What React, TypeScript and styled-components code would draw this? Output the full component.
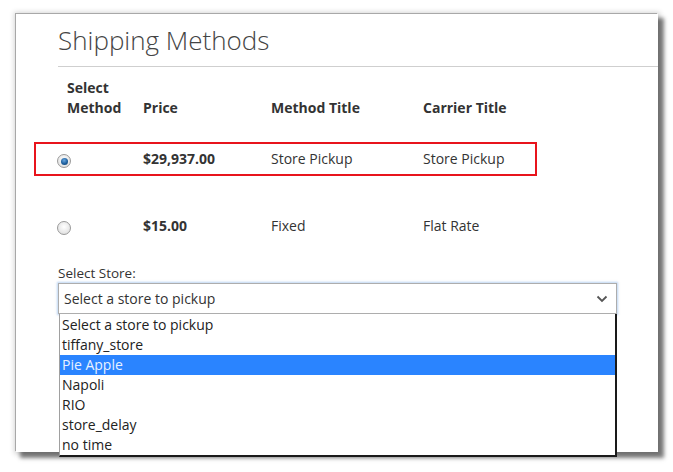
import React from "react";
import styled, { createGlobalStyle } from "styled-components";

const Global = createGlobalStyle`
  html, body { margin: 0; padding: 0; background: #ffffff; }
  body { font-family: "Open Sans", "Liberation Sans", sans-serif; color: #333; }
`;

const Stage = styled.div`
  width: 673px;
  height: 472px;
  padding: 14px 0 0 16px;
  box-sizing: border-box;
  overflow: hidden;
`;

const Panel = styled.div`
  position: relative;
  width: 642px;
  height: 438px;
  background: #fff;
  box-shadow: -1px -1px 0 0 #a8a8a8, 0 0 5px 2px rgba(0, 0, 0, 0.16), 5px 5px 4px 1px rgba(0, 0, 0, 0.5);
  padding-left: 42px;
  box-sizing: border-box;
`;

const Title = styled.h1`
  margin: 0;
  padding-top: 8px;
  height: 44px;
  font-size: 26px;
  font-weight: 300;
  color: #444;
  line-height: 36px;
  box-sizing: border-box;
`;

const Rule = styled.div`
  height: 1px;
  background: #cfcfcf;
  margin-top: 8px;
`;

const TableWrap = styled.div`
  position: relative;
`;

const Grid = styled.div`
  display: grid;
  grid-template-columns: 76px 128px 152px 1fr;
  padding-left: 9px;
  font-size: 14px;
`;

const HeadCell = styled.div`
  font-weight: 700;
  line-height: 20px;
  padding-top: 10px;
  height: 52px;
  box-sizing: border-box;
  display: flex;
  flex-direction: column;
  justify-content: flex-end;
  padding-bottom: 1px;
`;

const Cell = styled.div<{ $h: number; $top: number; $bold?: boolean }>`
  height: ${(p) => p.$h}px;
  margin-top: ${(p) => p.$top}px;
  display: flex;
  align-items: center;
  font-weight: ${(p) => (p.$bold ? 700 : 400)};
`;

const Highlight = styled.div`
  position: absolute;
  left: -24px;
  top: 75px;
  width: 503px;
  height: 34px;
  border: 2px solid #e8141c;
  box-sizing: border-box;
  pointer-events: none;
`;

const Radio = styled.span<{ $on?: boolean }>`
  width: 14px;
  height: 14px;
  border-radius: 50%;
  margin-left: -10px;
  margin-top: 6px;
  box-sizing: border-box;
  border: 1px solid #9a9a9a;
  background: radial-gradient(circle at 50% 40%, #ffffff 0%, #e4e4e4 70%, #cfcfcf 100%);
  display: flex;
  align-items: center;
  justify-content: center;
  &::after {
    content: "";
    display: ${(p) => (p.$on ? "block" : "none")};
    width: 7px;
    height: 7px;
    border-radius: 50%;
    background: radial-gradient(circle at 45% 35%, #6aa8e0 0%, #1d5f9e 55%, #0c3a66 100%);
  }
`;

const Field = styled.div`
  position: relative;
  margin-top: 19px;
  width: 559px;
`;

const Label = styled.div`
  font-size: 13.5px;
  line-height: 16px;
  color: #333;
`;

const SelectBox = styled.div`
  margin-top: 2px;
  height: 31px;
  border: 1px solid #adadad;
  box-shadow: 0 0 2px 1px rgba(120, 170, 230, 0.5);
  box-sizing: border-box;
  display: flex;
  align-items: center;
  justify-content: space-between;
  padding: 0 8px 0 5px;
  font-size: 14px;
  color: #333;
`;

const List = styled.div`
  position: absolute;
  left: 1px;
  top: 49px;
  width: 558px;
  box-sizing: border-box;
  background: #fff;
  border-left: 1px solid #a0a0a0;
  border-right: 2px solid #1a1a1a;
  border-bottom: 2px solid #1a1a1a;
  padding-top: 1px;
`;

const Option = styled.div<{ $active?: boolean }>`
  height: 20px;
  line-height: 20px;
  padding-left: 2px;
  font-size: 14px;
  color: ${(p) => (p.$active ? "#e8f1ff" : "#222")};
  background: ${(p) => (p.$active ? "#2a84ff" : "transparent")};
`;

const options = [
  "Select a store to pickup",
  "tiffany_store",
  "Pie Apple",
  "Napoli",
  "RIO",
  "store_delay",
  "no time",
];

const rows = [
  { on: true, price: "$29,937.00", method: "Store Pickup", carrier: "Store Pickup", h: 38, top: 20 },
  { on: false, price: "$15.00", method: "Fixed", carrier: "Flat Rate", h: 42, top: 27 },
];

export default function App() {
  return (
    <Stage>
      <Global />
      <Panel>
        <Title>Shipping Methods</Title>
        <Rule />
        <TableWrap>
          <Grid>
            <HeadCell>
              <span>Select</span>
              <span>Method</span>
            </HeadCell>
            <HeadCell>Price</HeadCell>
            <HeadCell>Method Title</HeadCell>
            <HeadCell>Carrier Title</HeadCell>
            {rows.map((r) => (
              <React.Fragment key={r.price}>
                <Cell $h={r.h} $top={r.top}>
                  <Radio $on={r.on} />
                </Cell>
                <Cell $h={r.h} $top={r.top} $bold>
                  {r.price}
                </Cell>
                <Cell $h={r.h} $top={r.top}>
                  {r.method}
                </Cell>
                <Cell $h={r.h} $top={r.top}>
                  {r.carrier}
                </Cell>
              </React.Fragment>
            ))}
          </Grid>
          <Highlight />
        </TableWrap>
        <Field>
          <Label>Select Store:</Label>
          <SelectBox>
            <span>Select a store to pickup</span>
            <svg width="12" height="8" viewBox="0 0 12 8">
              <path d="M1.5 1.5 L6 6 L10.5 1.5" fill="none" stroke="#555" strokeWidth="1.8" />
            </svg>
          </SelectBox>
          <List>
            {options.map((o) => (
              <Option key={o} $active={o === "Pie Apple"}>
                {o}
              </Option>
            ))}
          </List>
        </Field>
      </Panel>
    </Stage>
  );
}
